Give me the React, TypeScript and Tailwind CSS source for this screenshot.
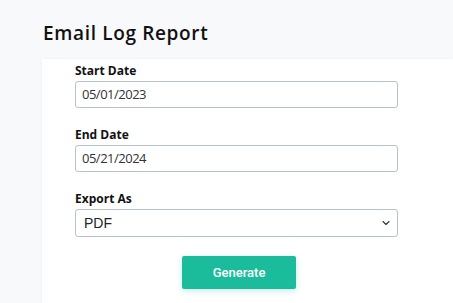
import { ChevronDown } from 'lucide-react';

const fields = [
  { id: 'start', label: 'Start Date', value: '05/01/2023' },
  { id: 'end', label: 'End Date', value: '05/21/2024' },
];

export default function App(): React.ReactElement {
  return (
    <div className="h-[303px] w-[453px] overflow-hidden bg-[#f8f9fb] font-['Open_Sans',sans-serif]">
      <h1 className="pl-[43px] pt-[20px] text-[19px] font-semibold leading-[26px] tracking-[0.65px] text-[#111]">
        Email Log Report
      </h1>
      <div className="ml-[42px] mt-[13px] h-[260px] bg-white pl-[33px] pt-[4px] shadow-[0_0_3px_rgba(0,0,0,0.06)]">
        <div className="flex w-[323px] flex-col">
          {fields.map((field) => (
            <div key={field.id} className="mb-[19px] flex flex-col">
              <label className="mb-[3px] text-[12px] font-bold leading-[15px] text-[#111]">
                {field.label}
              </label>
              <div className="flex h-[27px] items-center rounded-[3px] border border-[#b5c3cc] px-[6px] text-[13px] tracking-[-0.5px] text-[#333]">
                {field.value}
              </div>
            </div>
          ))}
          <div className="flex flex-col">
            <label className="mb-[3px] text-[12px] font-bold leading-[15px] text-[#111]">Export As</label>
            <div className="flex h-[28px] items-center justify-between rounded-[3px] border border-[#b5c3cc] pl-[8px] pr-[5px] font-['Liberation_Sans',sans-serif] text-[14px] text-[#212529]">
              <span>PDF</span>
              <ChevronDown size={12} strokeWidth={2.2} className="text-[#333]" />
            </div>
          </div>
          <div className="mt-[19px] flex justify-center pl-[5px]">
            <button
              type="button"
              className="h-[33px] w-[114px] rounded-[2px] bg-[#1abc9c] font-['Roboto',sans-serif] text-[13px] font-medium text-white shadow-[0_2px_6px_rgba(26,188,156,0.25)]"
            >
              Generate
            </button>
          </div>
        </div>
      </div>
    </div>
  );
}
